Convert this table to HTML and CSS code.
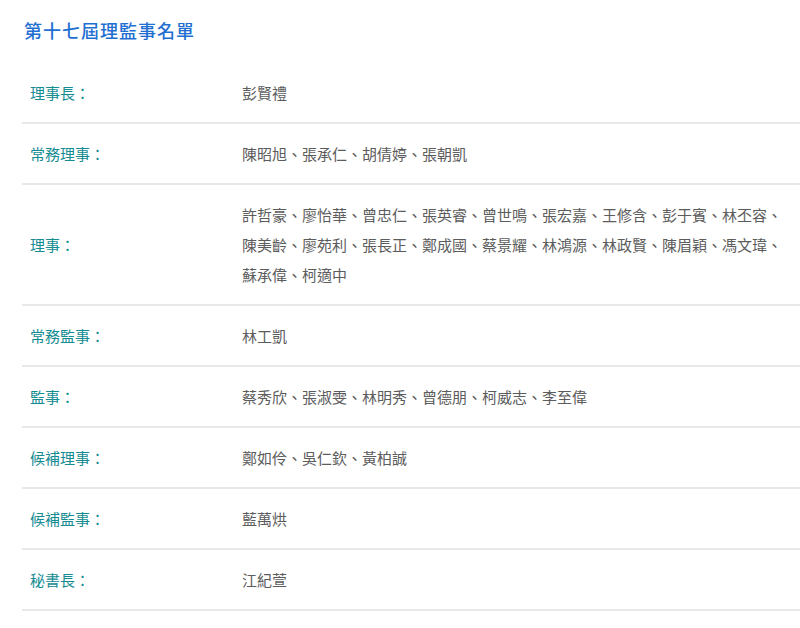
FILE: index.html
```html
<!DOCTYPE html>
<html lang="zh-Hant">
<head>
<meta charset="utf-8">
<title>第十七屆理監事名單</title>
<link rel="stylesheet" href="styles.css">
</head>
<body>
<div class="page">
  <h2 class="title">第十七屆理監事名單</h2>
  <div class="list">
    <div class="row"><div class="label">理事長：</div><div class="value">彭賢禮</div></div>
    <div class="row"><div class="label">常務理事：</div><div class="value">陳昭旭、張承仁、胡倩婷、張朝凱</div></div>
    <div class="row"><div class="label">理事：</div><div class="value">許哲豪、廖怡華、曾忠仁、張英睿、曾世鳴、張宏嘉、王修含、彭于賓、林丕容、陳美齡、廖苑利、張長正、鄭成國、蔡景耀、林鴻源、林政賢、陳眉穎、馮文瑋、蘇承偉、柯適中</div></div>
    <div class="row"><div class="label">常務監事：</div><div class="value">林工凱</div></div>
    <div class="row"><div class="label">監事：</div><div class="value">蔡秀欣、張淑雯、林明秀、曾德朋、柯威志、李至偉</div></div>
    <div class="row"><div class="label">候補理事：</div><div class="value">鄭如伶、吳仁欽、黃柏誠</div></div>
    <div class="row"><div class="label">候補監事：</div><div class="value">藍萬烘</div></div>
    <div class="row"><div class="label">秘書長：</div><div class="value">江紀萱</div></div>
  </div>
</div>
</body>
</html>
```
FILE: styles.css
```css
html, body {
  margin: 0;
  padding: 0;
  background: #ffffff;
}
body {
  font-family: "Noto Sans CJK TC", "Noto Sans", sans-serif;
}
.page {
  padding: 0 0 0 22px;
}
.title {
  margin: 0;
  padding: 18px 0 0 2px;
  height: 42px;
  box-sizing: border-box;
  font-size: 18px;
  line-height: 24px;
  font-weight: 500;
  letter-spacing: 1px;
  color: #1f6fd1;
}
.list {
  margin-top: 21px;
}
.row {
  display: flex;
  align-items: center;
  border-bottom: 2px solid #e8e8e8;
  padding: 14.5px 0;
  font-size: 15px;
  line-height: 30px;
}
.label {
  width: 220px;
  flex: none;
  box-sizing: border-box;
  padding-left: 8px;
  color: #158c92;
}
.value {
  flex: 1;
  color: #5c5c5c;
  padding-right: 10px;
}
```
